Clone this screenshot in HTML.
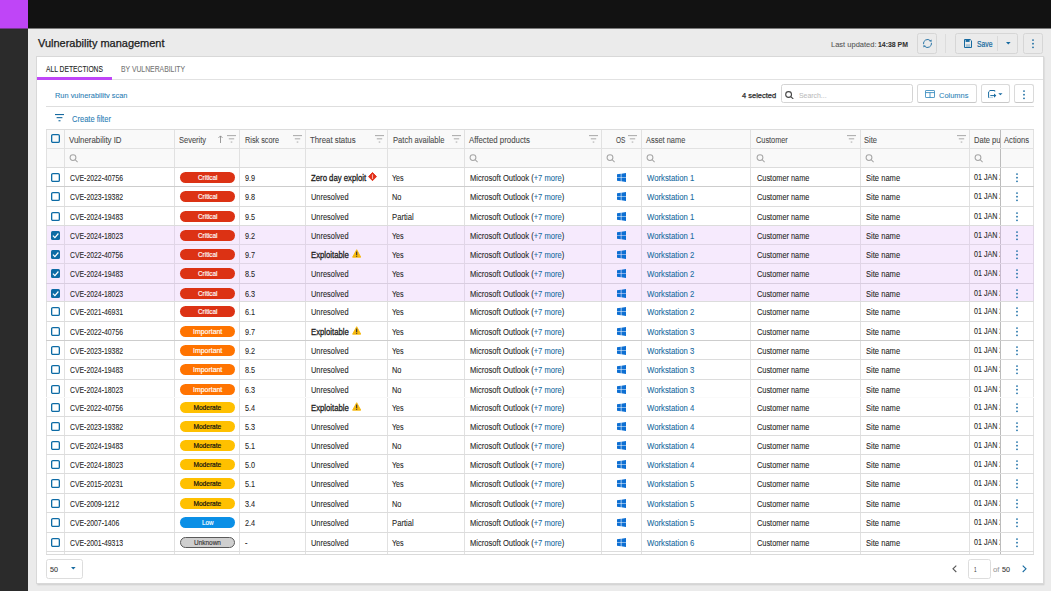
<!DOCTYPE html>
<html><head><meta charset="utf-8"><title>Vulnerability management</title><style>
*{margin:0;padding:0;box-sizing:border-box}
html,body{width:1051px;height:591px;overflow:hidden;background:#ebebeb;font-family:"Liberation Sans",sans-serif;color:#262626}
.ab{position:absolute}
.t{white-space:nowrap;transform-origin:0 50%;-webkit-text-stroke:0.08px currentColor}
.badge{position:absolute;width:55px;height:11px;border-radius:5.5px}
.Critical{background:#dc3214}
.Important{background:#ff7300}
.Moderate{background:#ffc000}
.Low{background:#0a8fe6}
.Unknown{background:#cfcfcf;border:0.9px solid #5a5a5a}
.btn{position:absolute;border:1px solid #d6d6d6;border-radius:2.5px}
</style></head><body>

<div class="ab" style="left:0px;top:0px;width:28px;height:591px;background:#2b2b2b;"></div>
<div class="ab" style="left:0px;top:0px;width:28px;height:28px;background:#bf45f7;"></div>
<div class="ab" style="left:28px;top:0px;width:1023px;height:28px;background:#121212;"></div>
<div class="ab" style="left:28px;top:28px;width:1023px;height:1px;background:#7a7a7a;"></div>
<div class="ab" style="left:0px;top:28px;width:28px;height:1px;background:#76388f;"></div>
<div class="ab t" style="left:38.30px;top:37.85px;font-size:10.9px;line-height:10.9px;transform:scaleX(1.008);color:#1a1a1a;-webkit-text-stroke:0.25px #1a1a1a;">Vulnerability management</div>
<div class="ab t" style="left:830.80px;top:41.10px;font-size:7.4px;line-height:7.4px;transform:scaleX(1.017);color:#555;">Last updated:</div>
<div class="ab t" style="left:878.30px;top:41.10px;font-size:7.4px;line-height:7.4px;transform:scaleX(0.932);color:#333;font-weight:bold;">14:38 PM</div>
<div class="btn" style="left:917px;top:33px;width:20px;height:21px"></div>
<svg class="ab" style="left:921.9px;top:37.9px" width="11" height="11" viewBox="0 0 11 11"><path d="M1.561 6.195 A4 4 0 0 1 8.328 2.672" fill="none" stroke="#176aa0" stroke-width="0.9"/><path d="M9.439 4.805 A4 4 0 0 1 2.672 8.328" fill="none" stroke="#176aa0" stroke-width="0.9"/><path d="M9.6 3.7 L9.5 1.5 L7.3 3.3 Z" fill="#176aa0"/><path d="M1.4 7.3 L1.5 9.5 L3.7 7.7 Z" fill="#176aa0"/></svg>
<div class="ab" style="left:945px;top:34px;width:1px;height:19px;background:#dcdcdc;"></div>
<div class="btn" style="left:955px;top:33px;width:63px;height:21px"></div>
<div class="ab" style="left:997.2px;top:35.9px;width:1px;height:15px;background:#dadada;"></div>
<svg class="ab" style="left:964px;top:38.9px" width="8" height="9" viewBox="0 0 8 9"><path d="M0.5 0.5 H6.2 L7.5 1.8 V8.5 H0.5 Z" fill="none" stroke="#176aa0" stroke-width="1"/><rect x="1.6" y="0.5" width="4" height="2.4" fill="#176aa0"/><rect x="1.8" y="5.2" width="4.4" height="2.8" fill="#176aa0" opacity="0.3"/></svg>
<div class="ab t" style="left:976.60px;top:40.70px;font-size:8.2px;line-height:8.2px;transform:scaleX(0.824);color:#176aa0;-webkit-text-stroke:0.2px #176aa0;">Save</div>
<svg class="ab" style="left:1005.6px;top:42.2px" width="5" height="3" viewBox="0 0 5 3"><path d="M0 0 H4.6 L2.3 2.4 Z" fill="#176aa0"/></svg>
<div class="btn" style="left:1023px;top:33px;width:20px;height:21px"></div>
<svg class="ab" style="left:1030.8px;top:38.6px" width="4" height="10" viewBox="0 0 4 10"><circle cx="2" cy="1.1" r="0.88" fill="#176aa0"/><circle cx="2" cy="4.7" r="0.88" fill="#176aa0"/><circle cx="2" cy="8.3" r="0.88" fill="#176aa0"/></svg>
<div class="ab" style="left:36px;top:56px;width:1008px;height:528px;background:#fff;border:1px solid #d8d8d8;box-shadow:0.5px 1px 1.5px rgba(0,0,0,0.15)"></div>
<div class="ab t" style="left:46.00px;top:65.15px;font-size:8.3px;line-height:8.3px;transform:scaleX(0.811);color:#1e1e1e;-webkit-text-stroke:0.1px #1e1e1e;">ALL DETECTIONS</div>
<div class="ab t" style="left:121.00px;top:65.15px;font-size:8.3px;line-height:8.3px;transform:scaleX(0.823);color:#747474;">BY VULNERABILITY</div>
<div class="ab" style="left:37px;top:79.2px;width:1006px;height:0.9px;background:#e2e2e2;"></div>
<div class="ab" style="left:37px;top:77.1px;width:75px;height:2.5px;background:#bf45f7;"></div>
<div class="ab" style="left:50px;top:88px;width:90px;height:10.4px;overflow:hidden">
<div class="ab t" style="left:4.70px;top:3.85px;font-size:7.9px;line-height:7.9px;transform:scaleX(0.938);color:#2a7db4;">Run vulnerability scan</div>
</div>
<div class="ab t" style="left:741.90px;top:92.00px;font-size:7.6px;line-height:7.6px;transform:scaleX(0.987);color:#2a2a2a;-webkit-text-stroke:0.25px #2a2a2a;">4 selected</div>
<div class="btn" style="left:781px;top:84px;width:132px;height:19px;border-color:#d4d4d4"></div>
<svg class="ab" style="left:785.2px;top:90.6px" width="9" height="8" viewBox="0 0 9 8"><circle cx="3.6" cy="3.5" r="2.9" fill="none" stroke="#454545" stroke-width="1.1"/><line x1="5.7" y1="5.6" x2="8.3" y2="7.9" stroke="#454545" stroke-width="1.1"/></svg>
<div class="ab t" style="left:798.80px;top:91.90px;font-size:7.8px;line-height:7.8px;transform:scaleX(0.884);color:#bdbdbd;">Search...</div>
<div class="btn" style="left:917px;top:84px;width:60px;height:19px;border-color:#dadada;border-bottom-color:#c8c8c8"></div>
<svg class="ab" style="left:925px;top:89.9px" width="10" height="8" viewBox="0 0 10 8"><rect x="0.45" y="0.45" width="9.1" height="7.1" rx="0.6" fill="none" stroke="#3a8cc0" stroke-width="0.9"/><line x1="0.45" y1="2.6" x2="9.55" y2="2.6" stroke="#3a8cc0" stroke-width="0.9"/><line x1="5" y1="2.6" x2="5" y2="7.55" stroke="#3a8cc0" stroke-width="0.9"/></svg>
<div class="ab t" style="left:938.80px;top:91.90px;font-size:7.8px;line-height:7.8px;transform:scaleX(0.955);color:#2f84b8;">Columns</div>
<div class="btn" style="left:981px;top:84px;width:29px;height:19px;border-color:#dadada;border-bottom-color:#c8c8c8"></div>
<svg class="ab" style="left:987.8px;top:89.8px" width="16" height="9" viewBox="0 0 16 9"><path d="M0.6 7.7 V1.9 L2 0.5 H6.8 V1.6" fill="none" stroke="#176aa0" stroke-width="1"/><path d="M0.6 7.6 H5" fill="none" stroke="#176aa0" stroke-width="0.6" opacity="0.5"/><path d="M2.3 5.6 H6.6" stroke="#176aa0" stroke-width="1"/><path d="M6 3.5 L8.3 5.6 L6 7.7 Z" fill="#176aa0"/><path d="M10.3 3.3 H14.5 L12.4 5.2 Z" fill="#176aa0"/></svg>
<div class="btn" style="left:1014px;top:84px;width:20px;height:19px;border-color:#dadada;border-bottom-color:#c8c8c8"></div>
<svg class="ab" style="left:1022.2px;top:89.6px" width="4" height="10" viewBox="0 0 4 10"><circle cx="2" cy="1.1" r="0.88" fill="#176aa0"/><circle cx="2" cy="4.7" r="0.88" fill="#176aa0"/><circle cx="2" cy="8.3" r="0.88" fill="#176aa0"/></svg>
<div class="ab" style="left:46.2px;top:105.8px;width:987.7px;height:1px;background:#dedede;"></div>
<svg class="ab" style="left:54.6px;top:114.4px" width="9" height="8" viewBox="0 0 9 8"><rect x="0" y="0" width="9" height="1.1" fill="#176aa0"/><rect x="1.6" y="3.1" width="5.8" height="1.1" fill="#176aa0"/><rect x="3.5" y="6.2" width="2" height="1.1" fill="#176aa0"/></svg>
<div class="ab t" style="left:72.00px;top:115.15px;font-size:8.3px;line-height:8.3px;transform:scaleX(0.907);color:#2a7db4;">Create filter</div>
<div class="ab" style="left:46.4px;top:129.3px;width:987.1999999999999px;height:38.0px;background:#f9f9f9;"></div>
<div class="ab" style="left:45.9px;top:129.3px;width:1px;height:425.59999999999997px;background:#e1e1e1;"></div>
<div class="ab" style="left:63.900000000000006px;top:129.3px;width:1px;height:425.59999999999997px;background:#e1e1e1;"></div>
<div class="ab" style="left:174.1px;top:129.3px;width:1px;height:425.59999999999997px;background:#e1e1e1;"></div>
<div class="ab" style="left:238.9px;top:129.3px;width:1px;height:425.59999999999997px;background:#e1e1e1;"></div>
<div class="ab" style="left:305.1px;top:129.3px;width:1px;height:425.59999999999997px;background:#e1e1e1;"></div>
<div class="ab" style="left:387.0px;top:129.3px;width:1px;height:425.59999999999997px;background:#e1e1e1;"></div>
<div class="ab" style="left:464.1px;top:129.3px;width:1px;height:425.59999999999997px;background:#e1e1e1;"></div>
<div class="ab" style="left:601.1px;top:129.3px;width:1px;height:425.59999999999997px;background:#e1e1e1;"></div>
<div class="ab" style="left:641.1px;top:129.3px;width:1px;height:425.59999999999997px;background:#e1e1e1;"></div>
<div class="ab" style="left:750.2px;top:129.3px;width:1px;height:425.59999999999997px;background:#e1e1e1;"></div>
<div class="ab" style="left:859.9px;top:129.3px;width:1px;height:425.59999999999997px;background:#e1e1e1;"></div>
<div class="ab" style="left:969.1px;top:129.3px;width:1px;height:425.59999999999997px;background:#e1e1e1;"></div>
<div class="ab" style="left:999.9px;top:129.3px;width:1px;height:425.59999999999997px;background:#bcbcbc;"></div>
<div class="ab" style="left:1033.1px;top:129.3px;width:1px;height:425.59999999999997px;background:#e1e1e1;"></div>
<div class="ab" style="left:46.4px;top:129.3px;width:987.1999999999999px;height:1px;background:#dcdcdc;"></div>
<div class="ab" style="left:46.4px;top:148.2px;width:987.1999999999999px;height:1px;background:#e2e2e2;"></div>
<div class="ab" style="left:46.4px;top:167px;width:987.1999999999999px;height:1px;background:#dcdcdc;"></div>
<div class="ab" style="left:46.4px;top:186px;width:987.1999999999999px;height:1px;background:#cdcdcd;"></div>
<div class="ab" style="left:46.4px;top:206px;width:987.1999999999999px;height:1px;background:#dcdcdc;"></div>
<div class="ab" style="left:46.4px;top:225px;width:987.1999999999999px;height:1px;background:#dcdcdc;"></div>
<div class="ab" style="left:46.9px;top:226px;width:986.6999999999999px;height:18px;background:rgba(225,185,248,0.3);"></div>
<div class="ab" style="left:46.4px;top:244px;width:987.1999999999999px;height:1px;background:#e0d5e6;"></div>
<div class="ab" style="left:46.9px;top:245px;width:986.6999999999999px;height:18px;background:rgba(225,185,248,0.3);"></div>
<div class="ab" style="left:46.4px;top:263px;width:987.1999999999999px;height:1px;background:#e0d5e6;"></div>
<div class="ab" style="left:46.9px;top:264px;width:986.6999999999999px;height:19px;background:rgba(225,185,248,0.3);"></div>
<div class="ab" style="left:46.4px;top:283px;width:987.1999999999999px;height:1px;background:#d9cde0;"></div>
<div class="ab" style="left:46.9px;top:284px;width:986.6999999999999px;height:17px;background:rgba(225,185,248,0.3);"></div>
<div class="ab" style="left:46.4px;top:301px;width:987.1999999999999px;height:1px;background:#dcdcdc;"></div>
<div class="ab" style="left:46.4px;top:321px;width:987.1999999999999px;height:1px;background:#dcdcdc;"></div>
<div class="ab" style="left:46.4px;top:340px;width:987.1999999999999px;height:1px;background:#cdcdcd;"></div>
<div class="ab" style="left:46.4px;top:359px;width:987.1999999999999px;height:1px;background:#dcdcdc;"></div>
<div class="ab" style="left:46.4px;top:379px;width:987.1999999999999px;height:1px;background:#dcdcdc;"></div>
<div class="ab" style="left:46.4px;top:397px;width:987.1999999999999px;height:1px;background:#fafafa;"></div>
<div class="ab" style="left:46.4px;top:416px;width:987.1999999999999px;height:1px;background:#dcdcdc;"></div>
<div class="ab" style="left:46.4px;top:435px;width:987.1999999999999px;height:1px;background:#dcdcdc;"></div>
<div class="ab" style="left:46.4px;top:454px;width:987.1999999999999px;height:1px;background:#dcdcdc;"></div>
<div class="ab" style="left:46.4px;top:473px;width:987.1999999999999px;height:1px;background:#dcdcdc;"></div>
<div class="ab" style="left:46.4px;top:493px;width:987.1999999999999px;height:1px;background:#dcdcdc;"></div>
<div class="ab" style="left:46.4px;top:512px;width:987.1999999999999px;height:1px;background:#dcdcdc;"></div>
<div class="ab" style="left:46.4px;top:532px;width:987.1999999999999px;height:1px;background:#dcdcdc;"></div>
<div class="ab" style="left:46.4px;top:551px;width:987.1999999999999px;height:1px;background:#dcdcdc;"></div>
<div class="ab" style="left:46.4px;top:553.9px;width:987.1999999999999px;height:1px;background:#dadada;"></div>
<svg class="ab" style="left:51px;top:134px" width="9" height="9" viewBox="0 0 9 9"><rect x="0.65" y="0.65" width="7.7" height="7.7" rx="1.2" fill="none" stroke="#0d6ba5" stroke-width="1.3"/></svg>
<div class="ab t" style="left:69.40px;top:136.10px;font-size:8.4px;line-height:8.4px;transform:scaleX(0.938);color:#4a4a4a;">Vulnerability ID</div>
<div class="ab t" style="left:179.00px;top:136.10px;font-size:8.4px;line-height:8.4px;transform:scaleX(0.896);color:#4a4a4a;">Severity</div>
<svg class="ab" style="left:218.3px;top:134.6px" width="5" height="8.4" viewBox="0 0 5 8.4"><path d="M2.5 8.4 V1 M0.5 2.9 L2.5 0.9 L4.5 2.9" fill="none" stroke="#8a8a8a" stroke-width="0.85"/></svg>
<svg class="ab" style="left:227px;top:135px" width="9" height="8" viewBox="0 0 9 8"><rect x="0" y="0.2" width="9" height="0.9" fill="#a0a0a0"/><rect x="1.8" y="3.4" width="5.4" height="0.9" fill="#a0a0a0"/><rect x="3.7" y="6.6" width="1.6" height="0.9" fill="#a0a0a0"/></svg>
<div class="ab t" style="left:244.90px;top:136.10px;font-size:8.4px;line-height:8.4px;transform:scaleX(0.870);color:#4a4a4a;">Risk score</div>
<svg class="ab" style="left:292.9px;top:135px" width="9" height="8" viewBox="0 0 9 8"><rect x="0" y="0.2" width="9" height="0.9" fill="#a0a0a0"/><rect x="1.8" y="3.4" width="5.4" height="0.9" fill="#a0a0a0"/><rect x="3.7" y="6.6" width="1.6" height="0.9" fill="#a0a0a0"/></svg>
<div class="ab t" style="left:310.40px;top:136.10px;font-size:8.4px;line-height:8.4px;transform:scaleX(0.932);color:#4a4a4a;">Threat status</div>
<svg class="ab" style="left:375.1px;top:135px" width="9" height="8" viewBox="0 0 9 8"><rect x="0" y="0.2" width="9" height="0.9" fill="#a0a0a0"/><rect x="1.8" y="3.4" width="5.4" height="0.9" fill="#a0a0a0"/><rect x="3.7" y="6.6" width="1.6" height="0.9" fill="#a0a0a0"/></svg>
<div class="ab t" style="left:392.50px;top:136.10px;font-size:8.4px;line-height:8.4px;transform:scaleX(0.906);color:#4a4a4a;">Patch available</div>
<svg class="ab" style="left:452px;top:135px" width="9" height="8" viewBox="0 0 9 8"><rect x="0" y="0.2" width="9" height="0.9" fill="#a0a0a0"/><rect x="1.8" y="3.4" width="5.4" height="0.9" fill="#a0a0a0"/><rect x="3.7" y="6.6" width="1.6" height="0.9" fill="#a0a0a0"/></svg>
<div class="ab t" style="left:469.10px;top:136.10px;font-size:8.4px;line-height:8.4px;transform:scaleX(0.937);color:#4a4a4a;">Affected products</div>
<svg class="ab" style="left:588.8px;top:135px" width="9" height="8" viewBox="0 0 9 8"><rect x="0" y="0.2" width="9" height="0.9" fill="#a0a0a0"/><rect x="1.8" y="3.4" width="5.4" height="0.9" fill="#a0a0a0"/><rect x="3.7" y="6.6" width="1.6" height="0.9" fill="#a0a0a0"/></svg>
<div class="ab t" style="left:615.60px;top:136.10px;font-size:8.4px;line-height:8.4px;transform:scaleX(0.775);color:#4a4a4a;">OS</div>
<svg class="ab" style="left:628.3px;top:135px" width="9" height="8" viewBox="0 0 9 8"><rect x="0" y="0.2" width="9" height="0.9" fill="#a0a0a0"/><rect x="1.8" y="3.4" width="5.4" height="0.9" fill="#a0a0a0"/><rect x="3.7" y="6.6" width="1.6" height="0.9" fill="#a0a0a0"/></svg>
<div class="ab t" style="left:645.60px;top:136.10px;font-size:8.4px;line-height:8.4px;transform:scaleX(0.888);color:#4a4a4a;">Asset name</div>
<div class="ab t" style="left:756.30px;top:136.10px;font-size:8.4px;line-height:8.4px;transform:scaleX(0.876);color:#4a4a4a;">Customer</div>
<svg class="ab" style="left:847px;top:135px" width="9" height="8" viewBox="0 0 9 8"><rect x="0" y="0.2" width="9" height="0.9" fill="#a0a0a0"/><rect x="1.8" y="3.4" width="5.4" height="0.9" fill="#a0a0a0"/><rect x="3.7" y="6.6" width="1.6" height="0.9" fill="#a0a0a0"/></svg>
<div class="ab t" style="left:864.30px;top:136.10px;font-size:8.4px;line-height:8.4px;transform:scaleX(0.898);color:#4a4a4a;">Site</div>
<svg class="ab" style="left:956.8px;top:135px" width="9" height="8" viewBox="0 0 9 8"><rect x="0" y="0.2" width="9" height="0.9" fill="#a0a0a0"/><rect x="1.8" y="3.4" width="5.4" height="0.9" fill="#a0a0a0"/><rect x="3.7" y="6.6" width="1.6" height="0.9" fill="#a0a0a0"/></svg>
<div class="ab" style="left:969.6px;top:129px;width:30.299999999999955px;height:19px;overflow:hidden">
<div class="ab t" style="left:4.70px;top:7.10px;font-size:8.4px;line-height:8.4px;transform:scaleX(0.900);color:#4a4a4a;">Date published</div>
</div>
<div class="ab t" style="left:1004.20px;top:136.10px;font-size:8.4px;line-height:8.4px;transform:scaleX(0.911);color:#4a4a4a;">Actions</div>
<svg class="ab" style="left:68.8px;top:152.7px" width="10" height="10" viewBox="0 0 10 10"><circle cx="4.0" cy="4.6" r="2.9" fill="none" stroke="#a6a6a6" stroke-width="1.05"/><line x1="6.1" y1="6.7" x2="8.6" y2="9.2" stroke="#a6a6a6" stroke-width="1.05"/></svg>
<svg class="ab" style="left:469.2px;top:152.7px" width="10" height="10" viewBox="0 0 10 10"><circle cx="4.0" cy="4.6" r="2.9" fill="none" stroke="#a6a6a6" stroke-width="1.05"/><line x1="6.1" y1="6.7" x2="8.6" y2="9.2" stroke="#a6a6a6" stroke-width="1.05"/></svg>
<svg class="ab" style="left:606.2px;top:152.7px" width="10" height="10" viewBox="0 0 10 10"><circle cx="4.0" cy="4.6" r="2.9" fill="none" stroke="#a6a6a6" stroke-width="1.05"/><line x1="6.1" y1="6.7" x2="8.6" y2="9.2" stroke="#a6a6a6" stroke-width="1.05"/></svg>
<svg class="ab" style="left:645.6px;top:152.7px" width="10" height="10" viewBox="0 0 10 10"><circle cx="4.0" cy="4.6" r="2.9" fill="none" stroke="#a6a6a6" stroke-width="1.05"/><line x1="6.1" y1="6.7" x2="8.6" y2="9.2" stroke="#a6a6a6" stroke-width="1.05"/></svg>
<svg class="ab" style="left:755.5px;top:152.7px" width="10" height="10" viewBox="0 0 10 10"><circle cx="4.0" cy="4.6" r="2.9" fill="none" stroke="#a6a6a6" stroke-width="1.05"/><line x1="6.1" y1="6.7" x2="8.6" y2="9.2" stroke="#a6a6a6" stroke-width="1.05"/></svg>
<svg class="ab" style="left:864.5px;top:152.7px" width="10" height="10" viewBox="0 0 10 10"><circle cx="4.0" cy="4.6" r="2.9" fill="none" stroke="#a6a6a6" stroke-width="1.05"/><line x1="6.1" y1="6.7" x2="8.6" y2="9.2" stroke="#a6a6a6" stroke-width="1.05"/></svg>
<svg class="ab" style="left:973.7px;top:152.7px" width="10" height="10" viewBox="0 0 10 10"><circle cx="4.0" cy="4.6" r="2.9" fill="none" stroke="#a6a6a6" stroke-width="1.05"/><line x1="6.1" y1="6.7" x2="8.6" y2="9.2" stroke="#a6a6a6" stroke-width="1.05"/></svg>
<svg class="ab" style="left:51px;top:173px" width="9" height="9" viewBox="0 0 9 9"><rect x="0.65" y="0.65" width="7.7" height="7.7" rx="1.2" fill="none" stroke="#0d6ba5" stroke-width="1.3"/></svg>
<div class="ab t" style="left:69.60px;top:174.70px;font-size:8.2px;line-height:8.2px;transform:scaleX(0.839);color:#262626;">CVE-2022-40756</div>
<div class="badge Critical" style="left:179.9px;top:171.70px"></div>
<div class="ab t" style="left:197.65px;top:174.50px;font-size:6.6px;line-height:6.6px;transform:scaleX(0.967);color:#fff;-webkit-text-stroke:0.15px #fff;">Critical</div>
<div class="ab t" style="left:244.60px;top:174.70px;font-size:8.2px;line-height:8.2px;transform:scaleX(0.887);">9.9</div>
<div class="ab t" style="left:311.40px;top:174.70px;font-size:8.2px;line-height:8.2px;transform:scaleX(0.948);color:#1a1a1a;-webkit-text-stroke:0.26px #1a1a1a;">Zero day exploit</div>
<svg class="ab" style="left:368.3px;top:172.20000000000002px" width="9" height="9.2" viewBox="0 0 9 9.2"><path d="M4.5 0.5 L8.5 4.6 L4.5 8.7 L0.5 4.6 Z" fill="#e2301a" stroke="#e2301a" stroke-width="0.9" stroke-linejoin="round"/><rect x="3.95" y="2.2" width="1.1" height="4.8" rx="0.5" fill="#f4b0a8"/></svg>
<div class="ab t" style="left:392.30px;top:174.70px;font-size:8.2px;line-height:8.2px;transform:scaleX(0.876);">Yes</div>
<div class="ab t" style="left:469.90px;top:174.70px;font-size:8.2px;line-height:8.2px;transform:scaleX(0.927);">Microsoft Outlook (<span style="color:#176aa0">+7 more</span>)</div>
<svg class="ab" style="left:617px;top:172.8px" width="9" height="9" viewBox="0 0 9 9"><path d="M0 1.3 L3.8 0.75 V4.2 H0 Z M4.4 0.65 L9 0 V4.2 H4.4 Z M0 4.8 H3.8 V8.25 L0 7.7 Z M4.4 4.8 H9 V9 L4.4 8.35 Z" fill="#0d6fd3"/></svg>
<div class="ab t" style="left:646.90px;top:174.70px;font-size:8.2px;line-height:8.2px;transform:scaleX(0.946);color:#176aa0;">Workstation 1</div>
<div class="ab t" style="left:756.90px;top:174.70px;font-size:8.2px;line-height:8.2px;transform:scaleX(0.900);">Customer name</div>
<div class="ab t" style="left:865.60px;top:174.70px;font-size:8.2px;line-height:8.2px;transform:scaleX(0.926);">Site name</div>
<div class="ab" style="left:969.6px;top:168.30px;width:30.199999999999953px;height:18.70px;overflow:hidden">
<div class="ab t" style="left:4.90px;top:5.70px;font-size:8.2px;line-height:8.2px;transform:scaleX(0.870);">01 JAN 2024</div>
</div>
<svg class="ab" style="left:1015px;top:172.9px" width="4" height="10" viewBox="0 0 4 10"><circle cx="2" cy="1.1" r="0.88" fill="#1c6fa6"/><circle cx="2" cy="4.7" r="0.88" fill="#1c6fa6"/><circle cx="2" cy="8.3" r="0.88" fill="#1c6fa6"/></svg>
<svg class="ab" style="left:51px;top:192px" width="9" height="9" viewBox="0 0 9 9"><rect x="0.65" y="0.65" width="7.7" height="7.7" rx="1.2" fill="none" stroke="#0d6ba5" stroke-width="1.3"/></svg>
<div class="ab t" style="left:69.60px;top:193.70px;font-size:8.2px;line-height:8.2px;transform:scaleX(0.839);color:#262626;">CVE-2023-19382</div>
<div class="badge Critical" style="left:179.9px;top:190.70px"></div>
<div class="ab t" style="left:197.65px;top:193.50px;font-size:6.6px;line-height:6.6px;transform:scaleX(0.967);color:#fff;-webkit-text-stroke:0.15px #fff;">Critical</div>
<div class="ab t" style="left:244.60px;top:193.70px;font-size:8.2px;line-height:8.2px;transform:scaleX(0.887);">9.8</div>
<div class="ab t" style="left:311.40px;top:193.70px;font-size:8.2px;line-height:8.2px;transform:scaleX(0.908);">Unresolved</div>
<div class="ab t" style="left:392.30px;top:193.70px;font-size:8.2px;line-height:8.2px;transform:scaleX(0.900);">No</div>
<div class="ab t" style="left:469.90px;top:193.70px;font-size:8.2px;line-height:8.2px;transform:scaleX(0.927);">Microsoft Outlook (<span style="color:#176aa0">+7 more</span>)</div>
<svg class="ab" style="left:617px;top:191.8px" width="9" height="9" viewBox="0 0 9 9"><path d="M0 1.3 L3.8 0.75 V4.2 H0 Z M4.4 0.65 L9 0 V4.2 H4.4 Z M0 4.8 H3.8 V8.25 L0 7.7 Z M4.4 4.8 H9 V9 L4.4 8.35 Z" fill="#0d6fd3"/></svg>
<div class="ab t" style="left:646.90px;top:193.70px;font-size:8.2px;line-height:8.2px;transform:scaleX(0.946);color:#176aa0;">Workstation 1</div>
<div class="ab t" style="left:756.90px;top:193.70px;font-size:8.2px;line-height:8.2px;transform:scaleX(0.900);">Customer name</div>
<div class="ab t" style="left:865.60px;top:193.70px;font-size:8.2px;line-height:8.2px;transform:scaleX(0.926);">Site name</div>
<div class="ab" style="left:969.6px;top:187.30px;width:30.199999999999953px;height:19.70px;overflow:hidden">
<div class="ab t" style="left:4.90px;top:5.70px;font-size:8.2px;line-height:8.2px;transform:scaleX(0.870);">01 JAN 2024</div>
</div>
<svg class="ab" style="left:1015px;top:191.9px" width="4" height="10" viewBox="0 0 4 10"><circle cx="2" cy="1.1" r="0.88" fill="#1c6fa6"/><circle cx="2" cy="4.7" r="0.88" fill="#1c6fa6"/><circle cx="2" cy="8.3" r="0.88" fill="#1c6fa6"/></svg>
<svg class="ab" style="left:51px;top:212px" width="9" height="9" viewBox="0 0 9 9"><rect x="0.65" y="0.65" width="7.7" height="7.7" rx="1.2" fill="none" stroke="#0d6ba5" stroke-width="1.3"/></svg>
<div class="ab t" style="left:69.60px;top:213.70px;font-size:8.2px;line-height:8.2px;transform:scaleX(0.839);color:#262626;">CVE-2024-19483</div>
<div class="badge Critical" style="left:179.9px;top:210.70px"></div>
<div class="ab t" style="left:197.65px;top:213.50px;font-size:6.6px;line-height:6.6px;transform:scaleX(0.967);color:#fff;-webkit-text-stroke:0.15px #fff;">Critical</div>
<div class="ab t" style="left:244.60px;top:213.70px;font-size:8.2px;line-height:8.2px;transform:scaleX(0.887);">9.5</div>
<div class="ab t" style="left:311.40px;top:213.70px;font-size:8.2px;line-height:8.2px;transform:scaleX(0.908);">Unresolved</div>
<div class="ab t" style="left:392.30px;top:213.70px;font-size:8.2px;line-height:8.2px;transform:scaleX(0.939);">Partial</div>
<div class="ab t" style="left:469.90px;top:213.70px;font-size:8.2px;line-height:8.2px;transform:scaleX(0.927);">Microsoft Outlook (<span style="color:#176aa0">+7 more</span>)</div>
<svg class="ab" style="left:617px;top:211.8px" width="9" height="9" viewBox="0 0 9 9"><path d="M0 1.3 L3.8 0.75 V4.2 H0 Z M4.4 0.65 L9 0 V4.2 H4.4 Z M0 4.8 H3.8 V8.25 L0 7.7 Z M4.4 4.8 H9 V9 L4.4 8.35 Z" fill="#0d6fd3"/></svg>
<div class="ab t" style="left:646.90px;top:213.70px;font-size:8.2px;line-height:8.2px;transform:scaleX(0.946);color:#176aa0;">Workstation 1</div>
<div class="ab t" style="left:756.90px;top:213.70px;font-size:8.2px;line-height:8.2px;transform:scaleX(0.900);">Customer name</div>
<div class="ab t" style="left:865.60px;top:213.70px;font-size:8.2px;line-height:8.2px;transform:scaleX(0.926);">Site name</div>
<div class="ab" style="left:969.6px;top:207.30px;width:30.199999999999953px;height:18.70px;overflow:hidden">
<div class="ab t" style="left:4.90px;top:5.70px;font-size:8.2px;line-height:8.2px;transform:scaleX(0.870);">01 JAN 2024</div>
</div>
<svg class="ab" style="left:1015px;top:211.9px" width="4" height="10" viewBox="0 0 4 10"><circle cx="2" cy="1.1" r="0.88" fill="#1c6fa6"/><circle cx="2" cy="4.7" r="0.88" fill="#1c6fa6"/><circle cx="2" cy="8.3" r="0.88" fill="#1c6fa6"/></svg>
<svg class="ab" style="left:51px;top:231px" width="9" height="9" viewBox="0 0 9 9"><rect x="0" y="0" width="9" height="9" rx="1.5" fill="#0d6ba5"/><path d="M1.9 4.6 L3.9 6.6 L7.4 2.5" fill="none" stroke="#fff" stroke-width="1.2"/></svg>
<div class="ab t" style="left:69.60px;top:232.70px;font-size:8.2px;line-height:8.2px;transform:scaleX(0.839);color:#262626;">CVE-2024-18023</div>
<div class="badge Critical" style="left:179.9px;top:229.70px"></div>
<div class="ab t" style="left:197.65px;top:232.50px;font-size:6.6px;line-height:6.6px;transform:scaleX(0.967);color:#fff;-webkit-text-stroke:0.15px #fff;">Critical</div>
<div class="ab t" style="left:244.60px;top:232.70px;font-size:8.2px;line-height:8.2px;transform:scaleX(0.887);">9.2</div>
<div class="ab t" style="left:311.40px;top:232.70px;font-size:8.2px;line-height:8.2px;transform:scaleX(0.908);">Unresolved</div>
<div class="ab t" style="left:392.30px;top:232.70px;font-size:8.2px;line-height:8.2px;transform:scaleX(0.876);">Yes</div>
<div class="ab t" style="left:469.90px;top:232.70px;font-size:8.2px;line-height:8.2px;transform:scaleX(0.927);">Microsoft Outlook (<span style="color:#176aa0">+7 more</span>)</div>
<svg class="ab" style="left:617px;top:230.8px" width="9" height="9" viewBox="0 0 9 9"><path d="M0 1.3 L3.8 0.75 V4.2 H0 Z M4.4 0.65 L9 0 V4.2 H4.4 Z M0 4.8 H3.8 V8.25 L0 7.7 Z M4.4 4.8 H9 V9 L4.4 8.35 Z" fill="#0d6fd3"/></svg>
<div class="ab t" style="left:646.90px;top:232.70px;font-size:8.2px;line-height:8.2px;transform:scaleX(0.946);color:#176aa0;">Workstation 1</div>
<div class="ab t" style="left:756.90px;top:232.70px;font-size:8.2px;line-height:8.2px;transform:scaleX(0.900);">Customer name</div>
<div class="ab t" style="left:865.60px;top:232.70px;font-size:8.2px;line-height:8.2px;transform:scaleX(0.926);">Site name</div>
<div class="ab" style="left:969.6px;top:226.30px;width:30.199999999999953px;height:18.70px;overflow:hidden">
<div class="ab t" style="left:4.90px;top:5.70px;font-size:8.2px;line-height:8.2px;transform:scaleX(0.870);">01 JAN 2024</div>
</div>
<svg class="ab" style="left:1015px;top:230.9px" width="4" height="10" viewBox="0 0 4 10"><circle cx="2" cy="1.1" r="0.88" fill="#1c6fa6"/><circle cx="2" cy="4.7" r="0.88" fill="#1c6fa6"/><circle cx="2" cy="8.3" r="0.88" fill="#1c6fa6"/></svg>
<svg class="ab" style="left:51px;top:250px" width="9" height="9" viewBox="0 0 9 9"><rect x="0" y="0" width="9" height="9" rx="1.5" fill="#0d6ba5"/><path d="M1.9 4.6 L3.9 6.6 L7.4 2.5" fill="none" stroke="#fff" stroke-width="1.2"/></svg>
<div class="ab t" style="left:69.60px;top:251.70px;font-size:8.2px;line-height:8.2px;transform:scaleX(0.839);color:#262626;">CVE-2022-40756</div>
<div class="badge Critical" style="left:179.9px;top:248.70px"></div>
<div class="ab t" style="left:197.65px;top:251.50px;font-size:6.6px;line-height:6.6px;transform:scaleX(0.967);color:#fff;-webkit-text-stroke:0.15px #fff;">Critical</div>
<div class="ab t" style="left:244.60px;top:251.70px;font-size:8.2px;line-height:8.2px;transform:scaleX(0.887);">9.7</div>
<div class="ab t" style="left:311.40px;top:251.70px;font-size:8.2px;line-height:8.2px;transform:scaleX(0.945);color:#1a1a1a;-webkit-text-stroke:0.26px #1a1a1a;">Exploitable</div>
<svg class="ab" style="left:351.8px;top:249.3px" width="9.4" height="9" viewBox="0 0 9.4 9"><path d="M4.7 0.7 L8.8 8.2 H0.6 Z" fill="#f6b90d" stroke="#f6b90d" stroke-width="0.9" stroke-linejoin="round"/><rect x="4.2" y="2.6" width="1.0" height="3.6" fill="#1e1e3a"/><rect x="4.2" y="6.9" width="1.0" height="0.9" fill="#1e1e3a"/></svg>
<div class="ab t" style="left:392.30px;top:251.70px;font-size:8.2px;line-height:8.2px;transform:scaleX(0.876);">Yes</div>
<div class="ab t" style="left:469.90px;top:251.70px;font-size:8.2px;line-height:8.2px;transform:scaleX(0.927);">Microsoft Outlook (<span style="color:#176aa0">+7 more</span>)</div>
<svg class="ab" style="left:617px;top:249.8px" width="9" height="9" viewBox="0 0 9 9"><path d="M0 1.3 L3.8 0.75 V4.2 H0 Z M4.4 0.65 L9 0 V4.2 H4.4 Z M0 4.8 H3.8 V8.25 L0 7.7 Z M4.4 4.8 H9 V9 L4.4 8.35 Z" fill="#0d6fd3"/></svg>
<div class="ab t" style="left:646.90px;top:251.70px;font-size:8.2px;line-height:8.2px;transform:scaleX(0.946);color:#176aa0;">Workstation 2</div>
<div class="ab t" style="left:756.90px;top:251.70px;font-size:8.2px;line-height:8.2px;transform:scaleX(0.900);">Customer name</div>
<div class="ab t" style="left:865.60px;top:251.70px;font-size:8.2px;line-height:8.2px;transform:scaleX(0.926);">Site name</div>
<div class="ab" style="left:969.6px;top:245.30px;width:30.199999999999953px;height:18.70px;overflow:hidden">
<div class="ab t" style="left:4.90px;top:5.70px;font-size:8.2px;line-height:8.2px;transform:scaleX(0.870);">01 JAN 2024</div>
</div>
<svg class="ab" style="left:1015px;top:249.9px" width="4" height="10" viewBox="0 0 4 10"><circle cx="2" cy="1.1" r="0.88" fill="#1c6fa6"/><circle cx="2" cy="4.7" r="0.88" fill="#1c6fa6"/><circle cx="2" cy="8.3" r="0.88" fill="#1c6fa6"/></svg>
<svg class="ab" style="left:51px;top:269px" width="9" height="9" viewBox="0 0 9 9"><rect x="0" y="0" width="9" height="9" rx="1.5" fill="#0d6ba5"/><path d="M1.9 4.6 L3.9 6.6 L7.4 2.5" fill="none" stroke="#fff" stroke-width="1.2"/></svg>
<div class="ab t" style="left:69.60px;top:270.70px;font-size:8.2px;line-height:8.2px;transform:scaleX(0.839);color:#262626;">CVE-2024-19483</div>
<div class="badge Critical" style="left:179.9px;top:267.70px"></div>
<div class="ab t" style="left:197.65px;top:270.50px;font-size:6.6px;line-height:6.6px;transform:scaleX(0.967);color:#fff;-webkit-text-stroke:0.15px #fff;">Critical</div>
<div class="ab t" style="left:244.60px;top:270.70px;font-size:8.2px;line-height:8.2px;transform:scaleX(0.887);">8.5</div>
<div class="ab t" style="left:311.40px;top:270.70px;font-size:8.2px;line-height:8.2px;transform:scaleX(0.908);">Unresolved</div>
<div class="ab t" style="left:392.30px;top:270.70px;font-size:8.2px;line-height:8.2px;transform:scaleX(0.876);">Yes</div>
<div class="ab t" style="left:469.90px;top:270.70px;font-size:8.2px;line-height:8.2px;transform:scaleX(0.927);">Microsoft Outlook (<span style="color:#176aa0">+7 more</span>)</div>
<svg class="ab" style="left:617px;top:268.8px" width="9" height="9" viewBox="0 0 9 9"><path d="M0 1.3 L3.8 0.75 V4.2 H0 Z M4.4 0.65 L9 0 V4.2 H4.4 Z M0 4.8 H3.8 V8.25 L0 7.7 Z M4.4 4.8 H9 V9 L4.4 8.35 Z" fill="#0d6fd3"/></svg>
<div class="ab t" style="left:646.90px;top:270.70px;font-size:8.2px;line-height:8.2px;transform:scaleX(0.946);color:#176aa0;">Workstation 2</div>
<div class="ab t" style="left:756.90px;top:270.70px;font-size:8.2px;line-height:8.2px;transform:scaleX(0.900);">Customer name</div>
<div class="ab t" style="left:865.60px;top:270.70px;font-size:8.2px;line-height:8.2px;transform:scaleX(0.926);">Site name</div>
<div class="ab" style="left:969.6px;top:264.30px;width:30.199999999999953px;height:19.70px;overflow:hidden">
<div class="ab t" style="left:4.90px;top:5.70px;font-size:8.2px;line-height:8.2px;transform:scaleX(0.870);">01 JAN 2024</div>
</div>
<svg class="ab" style="left:1015px;top:268.90000000000003px" width="4" height="10" viewBox="0 0 4 10"><circle cx="2" cy="1.1" r="0.88" fill="#1c6fa6"/><circle cx="2" cy="4.7" r="0.88" fill="#1c6fa6"/><circle cx="2" cy="8.3" r="0.88" fill="#1c6fa6"/></svg>
<svg class="ab" style="left:51px;top:289px" width="9" height="9" viewBox="0 0 9 9"><rect x="0" y="0" width="9" height="9" rx="1.5" fill="#0d6ba5"/><path d="M1.9 4.6 L3.9 6.6 L7.4 2.5" fill="none" stroke="#fff" stroke-width="1.2"/></svg>
<div class="ab t" style="left:69.60px;top:290.70px;font-size:8.2px;line-height:8.2px;transform:scaleX(0.839);color:#262626;">CVE-2024-18023</div>
<div class="badge Critical" style="left:179.9px;top:287.70px"></div>
<div class="ab t" style="left:197.65px;top:290.50px;font-size:6.6px;line-height:6.6px;transform:scaleX(0.967);color:#fff;-webkit-text-stroke:0.15px #fff;">Critical</div>
<div class="ab t" style="left:244.60px;top:290.70px;font-size:8.2px;line-height:8.2px;transform:scaleX(0.887);">6.3</div>
<div class="ab t" style="left:311.40px;top:290.70px;font-size:8.2px;line-height:8.2px;transform:scaleX(0.908);">Unresolved</div>
<div class="ab t" style="left:392.30px;top:290.70px;font-size:8.2px;line-height:8.2px;transform:scaleX(0.876);">Yes</div>
<div class="ab t" style="left:469.90px;top:290.70px;font-size:8.2px;line-height:8.2px;transform:scaleX(0.927);">Microsoft Outlook (<span style="color:#176aa0">+7 more</span>)</div>
<svg class="ab" style="left:617px;top:288.8px" width="9" height="9" viewBox="0 0 9 9"><path d="M0 1.3 L3.8 0.75 V4.2 H0 Z M4.4 0.65 L9 0 V4.2 H4.4 Z M0 4.8 H3.8 V8.25 L0 7.7 Z M4.4 4.8 H9 V9 L4.4 8.35 Z" fill="#0d6fd3"/></svg>
<div class="ab t" style="left:646.90px;top:290.70px;font-size:8.2px;line-height:8.2px;transform:scaleX(0.946);color:#176aa0;">Workstation 2</div>
<div class="ab t" style="left:756.90px;top:290.70px;font-size:8.2px;line-height:8.2px;transform:scaleX(0.900);">Customer name</div>
<div class="ab t" style="left:865.60px;top:290.70px;font-size:8.2px;line-height:8.2px;transform:scaleX(0.926);">Site name</div>
<div class="ab" style="left:969.6px;top:284.30px;width:30.199999999999953px;height:17.70px;overflow:hidden">
<div class="ab t" style="left:4.90px;top:5.70px;font-size:8.2px;line-height:8.2px;transform:scaleX(0.870);">01 JAN 2024</div>
</div>
<svg class="ab" style="left:1015px;top:288.90000000000003px" width="4" height="10" viewBox="0 0 4 10"><circle cx="2" cy="1.1" r="0.88" fill="#1c6fa6"/><circle cx="2" cy="4.7" r="0.88" fill="#1c6fa6"/><circle cx="2" cy="8.3" r="0.88" fill="#1c6fa6"/></svg>
<svg class="ab" style="left:51px;top:307px" width="9" height="9" viewBox="0 0 9 9"><rect x="0.65" y="0.65" width="7.7" height="7.7" rx="1.2" fill="none" stroke="#0d6ba5" stroke-width="1.3"/></svg>
<div class="ab t" style="left:69.60px;top:308.70px;font-size:8.2px;line-height:8.2px;transform:scaleX(0.839);color:#262626;">CVE-2021-46931</div>
<div class="badge Critical" style="left:179.9px;top:305.70px"></div>
<div class="ab t" style="left:197.65px;top:308.50px;font-size:6.6px;line-height:6.6px;transform:scaleX(0.967);color:#fff;-webkit-text-stroke:0.15px #fff;">Critical</div>
<div class="ab t" style="left:244.60px;top:308.70px;font-size:8.2px;line-height:8.2px;transform:scaleX(0.887);">6.1</div>
<div class="ab t" style="left:311.40px;top:308.70px;font-size:8.2px;line-height:8.2px;transform:scaleX(0.908);">Unresolved</div>
<div class="ab t" style="left:392.30px;top:308.70px;font-size:8.2px;line-height:8.2px;transform:scaleX(0.876);">Yes</div>
<div class="ab t" style="left:469.90px;top:308.70px;font-size:8.2px;line-height:8.2px;transform:scaleX(0.927);">Microsoft Outlook (<span style="color:#176aa0">+7 more</span>)</div>
<svg class="ab" style="left:617px;top:306.8px" width="9" height="9" viewBox="0 0 9 9"><path d="M0 1.3 L3.8 0.75 V4.2 H0 Z M4.4 0.65 L9 0 V4.2 H4.4 Z M0 4.8 H3.8 V8.25 L0 7.7 Z M4.4 4.8 H9 V9 L4.4 8.35 Z" fill="#0d6fd3"/></svg>
<div class="ab t" style="left:646.90px;top:308.70px;font-size:8.2px;line-height:8.2px;transform:scaleX(0.946);color:#176aa0;">Workstation 2</div>
<div class="ab t" style="left:756.90px;top:308.70px;font-size:8.2px;line-height:8.2px;transform:scaleX(0.900);">Customer name</div>
<div class="ab t" style="left:865.60px;top:308.70px;font-size:8.2px;line-height:8.2px;transform:scaleX(0.926);">Site name</div>
<div class="ab" style="left:969.6px;top:302.30px;width:30.199999999999953px;height:19.70px;overflow:hidden">
<div class="ab t" style="left:4.90px;top:5.70px;font-size:8.2px;line-height:8.2px;transform:scaleX(0.870);">01 JAN 2024</div>
</div>
<svg class="ab" style="left:1015px;top:306.90000000000003px" width="4" height="10" viewBox="0 0 4 10"><circle cx="2" cy="1.1" r="0.88" fill="#1c6fa6"/><circle cx="2" cy="4.7" r="0.88" fill="#1c6fa6"/><circle cx="2" cy="8.3" r="0.88" fill="#1c6fa6"/></svg>
<svg class="ab" style="left:51px;top:327px" width="9" height="9" viewBox="0 0 9 9"><rect x="0.65" y="0.65" width="7.7" height="7.7" rx="1.2" fill="none" stroke="#0d6ba5" stroke-width="1.3"/></svg>
<div class="ab t" style="left:69.60px;top:328.70px;font-size:8.2px;line-height:8.2px;transform:scaleX(0.839);color:#262626;">CVE-2022-40756</div>
<div class="badge Important" style="left:179.9px;top:325.70px"></div>
<div class="ab t" style="left:192.75px;top:328.50px;font-size:6.6px;line-height:6.6px;transform:scaleX(1.051);color:#fff;-webkit-text-stroke:0.15px #fff;">Important</div>
<div class="ab t" style="left:244.60px;top:328.70px;font-size:8.2px;line-height:8.2px;transform:scaleX(0.887);">9.7</div>
<div class="ab t" style="left:311.40px;top:328.70px;font-size:8.2px;line-height:8.2px;transform:scaleX(0.945);color:#1a1a1a;-webkit-text-stroke:0.26px #1a1a1a;">Exploitable</div>
<svg class="ab" style="left:351.8px;top:326.3px" width="9.4" height="9" viewBox="0 0 9.4 9"><path d="M4.7 0.7 L8.8 8.2 H0.6 Z" fill="#f6b90d" stroke="#f6b90d" stroke-width="0.9" stroke-linejoin="round"/><rect x="4.2" y="2.6" width="1.0" height="3.6" fill="#1e1e3a"/><rect x="4.2" y="6.9" width="1.0" height="0.9" fill="#1e1e3a"/></svg>
<div class="ab t" style="left:392.30px;top:328.70px;font-size:8.2px;line-height:8.2px;transform:scaleX(0.876);">Yes</div>
<div class="ab t" style="left:469.90px;top:328.70px;font-size:8.2px;line-height:8.2px;transform:scaleX(0.927);">Microsoft Outlook (<span style="color:#176aa0">+7 more</span>)</div>
<svg class="ab" style="left:617px;top:326.8px" width="9" height="9" viewBox="0 0 9 9"><path d="M0 1.3 L3.8 0.75 V4.2 H0 Z M4.4 0.65 L9 0 V4.2 H4.4 Z M0 4.8 H3.8 V8.25 L0 7.7 Z M4.4 4.8 H9 V9 L4.4 8.35 Z" fill="#0d6fd3"/></svg>
<div class="ab t" style="left:646.90px;top:328.70px;font-size:8.2px;line-height:8.2px;transform:scaleX(0.946);color:#176aa0;">Workstation 3</div>
<div class="ab t" style="left:756.90px;top:328.70px;font-size:8.2px;line-height:8.2px;transform:scaleX(0.900);">Customer name</div>
<div class="ab t" style="left:865.60px;top:328.70px;font-size:8.2px;line-height:8.2px;transform:scaleX(0.926);">Site name</div>
<div class="ab" style="left:969.6px;top:322.30px;width:30.199999999999953px;height:18.70px;overflow:hidden">
<div class="ab t" style="left:4.90px;top:5.70px;font-size:8.2px;line-height:8.2px;transform:scaleX(0.870);">01 JAN 2024</div>
</div>
<svg class="ab" style="left:1015px;top:326.90000000000003px" width="4" height="10" viewBox="0 0 4 10"><circle cx="2" cy="1.1" r="0.88" fill="#1c6fa6"/><circle cx="2" cy="4.7" r="0.88" fill="#1c6fa6"/><circle cx="2" cy="8.3" r="0.88" fill="#1c6fa6"/></svg>
<svg class="ab" style="left:51px;top:346px" width="9" height="9" viewBox="0 0 9 9"><rect x="0.65" y="0.65" width="7.7" height="7.7" rx="1.2" fill="none" stroke="#0d6ba5" stroke-width="1.3"/></svg>
<div class="ab t" style="left:69.60px;top:347.70px;font-size:8.2px;line-height:8.2px;transform:scaleX(0.839);color:#262626;">CVE-2023-19382</div>
<div class="badge Important" style="left:179.9px;top:344.70px"></div>
<div class="ab t" style="left:192.75px;top:347.50px;font-size:6.6px;line-height:6.6px;transform:scaleX(1.051);color:#fff;-webkit-text-stroke:0.15px #fff;">Important</div>
<div class="ab t" style="left:244.60px;top:347.70px;font-size:8.2px;line-height:8.2px;transform:scaleX(0.887);">9.2</div>
<div class="ab t" style="left:311.40px;top:347.70px;font-size:8.2px;line-height:8.2px;transform:scaleX(0.908);">Unresolved</div>
<div class="ab t" style="left:392.30px;top:347.70px;font-size:8.2px;line-height:8.2px;transform:scaleX(0.876);">Yes</div>
<div class="ab t" style="left:469.90px;top:347.70px;font-size:8.2px;line-height:8.2px;transform:scaleX(0.927);">Microsoft Outlook (<span style="color:#176aa0">+7 more</span>)</div>
<svg class="ab" style="left:617px;top:345.8px" width="9" height="9" viewBox="0 0 9 9"><path d="M0 1.3 L3.8 0.75 V4.2 H0 Z M4.4 0.65 L9 0 V4.2 H4.4 Z M0 4.8 H3.8 V8.25 L0 7.7 Z M4.4 4.8 H9 V9 L4.4 8.35 Z" fill="#0d6fd3"/></svg>
<div class="ab t" style="left:646.90px;top:347.70px;font-size:8.2px;line-height:8.2px;transform:scaleX(0.946);color:#176aa0;">Workstation 3</div>
<div class="ab t" style="left:756.90px;top:347.70px;font-size:8.2px;line-height:8.2px;transform:scaleX(0.900);">Customer name</div>
<div class="ab t" style="left:865.60px;top:347.70px;font-size:8.2px;line-height:8.2px;transform:scaleX(0.926);">Site name</div>
<div class="ab" style="left:969.6px;top:341.30px;width:30.199999999999953px;height:18.70px;overflow:hidden">
<div class="ab t" style="left:4.90px;top:5.70px;font-size:8.2px;line-height:8.2px;transform:scaleX(0.870);">01 JAN 2024</div>
</div>
<svg class="ab" style="left:1015px;top:345.90000000000003px" width="4" height="10" viewBox="0 0 4 10"><circle cx="2" cy="1.1" r="0.88" fill="#1c6fa6"/><circle cx="2" cy="4.7" r="0.88" fill="#1c6fa6"/><circle cx="2" cy="8.3" r="0.88" fill="#1c6fa6"/></svg>
<svg class="ab" style="left:51px;top:365px" width="9" height="9" viewBox="0 0 9 9"><rect x="0.65" y="0.65" width="7.7" height="7.7" rx="1.2" fill="none" stroke="#0d6ba5" stroke-width="1.3"/></svg>
<div class="ab t" style="left:69.60px;top:366.70px;font-size:8.2px;line-height:8.2px;transform:scaleX(0.839);color:#262626;">CVE-2024-19483</div>
<div class="badge Important" style="left:179.9px;top:363.70px"></div>
<div class="ab t" style="left:192.75px;top:366.50px;font-size:6.6px;line-height:6.6px;transform:scaleX(1.051);color:#fff;-webkit-text-stroke:0.15px #fff;">Important</div>
<div class="ab t" style="left:244.60px;top:366.70px;font-size:8.2px;line-height:8.2px;transform:scaleX(0.887);">8.5</div>
<div class="ab t" style="left:311.40px;top:366.70px;font-size:8.2px;line-height:8.2px;transform:scaleX(0.908);">Unresolved</div>
<div class="ab t" style="left:392.30px;top:366.70px;font-size:8.2px;line-height:8.2px;transform:scaleX(0.900);">No</div>
<div class="ab t" style="left:469.90px;top:366.70px;font-size:8.2px;line-height:8.2px;transform:scaleX(0.927);">Microsoft Outlook (<span style="color:#176aa0">+7 more</span>)</div>
<svg class="ab" style="left:617px;top:364.8px" width="9" height="9" viewBox="0 0 9 9"><path d="M0 1.3 L3.8 0.75 V4.2 H0 Z M4.4 0.65 L9 0 V4.2 H4.4 Z M0 4.8 H3.8 V8.25 L0 7.7 Z M4.4 4.8 H9 V9 L4.4 8.35 Z" fill="#0d6fd3"/></svg>
<div class="ab t" style="left:646.90px;top:366.70px;font-size:8.2px;line-height:8.2px;transform:scaleX(0.946);color:#176aa0;">Workstation 3</div>
<div class="ab t" style="left:756.90px;top:366.70px;font-size:8.2px;line-height:8.2px;transform:scaleX(0.900);">Customer name</div>
<div class="ab t" style="left:865.60px;top:366.70px;font-size:8.2px;line-height:8.2px;transform:scaleX(0.926);">Site name</div>
<div class="ab" style="left:969.6px;top:360.30px;width:30.199999999999953px;height:19.70px;overflow:hidden">
<div class="ab t" style="left:4.90px;top:5.70px;font-size:8.2px;line-height:8.2px;transform:scaleX(0.870);">01 JAN 2024</div>
</div>
<svg class="ab" style="left:1015px;top:364.90000000000003px" width="4" height="10" viewBox="0 0 4 10"><circle cx="2" cy="1.1" r="0.88" fill="#1c6fa6"/><circle cx="2" cy="4.7" r="0.88" fill="#1c6fa6"/><circle cx="2" cy="8.3" r="0.88" fill="#1c6fa6"/></svg>
<svg class="ab" style="left:51px;top:385px" width="9" height="9" viewBox="0 0 9 9"><rect x="0.65" y="0.65" width="7.7" height="7.7" rx="1.2" fill="none" stroke="#0d6ba5" stroke-width="1.3"/></svg>
<div class="ab t" style="left:69.60px;top:386.70px;font-size:8.2px;line-height:8.2px;transform:scaleX(0.839);color:#262626;">CVE-2024-18023</div>
<div class="badge Important" style="left:179.9px;top:383.70px"></div>
<div class="ab t" style="left:192.75px;top:386.50px;font-size:6.6px;line-height:6.6px;transform:scaleX(1.051);color:#fff;-webkit-text-stroke:0.15px #fff;">Important</div>
<div class="ab t" style="left:244.60px;top:386.70px;font-size:8.2px;line-height:8.2px;transform:scaleX(0.887);">6.3</div>
<div class="ab t" style="left:311.40px;top:386.70px;font-size:8.2px;line-height:8.2px;transform:scaleX(0.908);">Unresolved</div>
<div class="ab t" style="left:392.30px;top:386.70px;font-size:8.2px;line-height:8.2px;transform:scaleX(0.900);">No</div>
<div class="ab t" style="left:469.90px;top:386.70px;font-size:8.2px;line-height:8.2px;transform:scaleX(0.927);">Microsoft Outlook (<span style="color:#176aa0">+7 more</span>)</div>
<svg class="ab" style="left:617px;top:384.8px" width="9" height="9" viewBox="0 0 9 9"><path d="M0 1.3 L3.8 0.75 V4.2 H0 Z M4.4 0.65 L9 0 V4.2 H4.4 Z M0 4.8 H3.8 V8.25 L0 7.7 Z M4.4 4.8 H9 V9 L4.4 8.35 Z" fill="#0d6fd3"/></svg>
<div class="ab t" style="left:646.90px;top:386.70px;font-size:8.2px;line-height:8.2px;transform:scaleX(0.946);color:#176aa0;">Workstation 3</div>
<div class="ab t" style="left:756.90px;top:386.70px;font-size:8.2px;line-height:8.2px;transform:scaleX(0.900);">Customer name</div>
<div class="ab t" style="left:865.60px;top:386.70px;font-size:8.2px;line-height:8.2px;transform:scaleX(0.926);">Site name</div>
<div class="ab" style="left:969.6px;top:380.30px;width:30.199999999999953px;height:17.70px;overflow:hidden">
<div class="ab t" style="left:4.90px;top:5.70px;font-size:8.2px;line-height:8.2px;transform:scaleX(0.870);">01 JAN 2024</div>
</div>
<svg class="ab" style="left:1015px;top:384.90000000000003px" width="4" height="10" viewBox="0 0 4 10"><circle cx="2" cy="1.1" r="0.88" fill="#1c6fa6"/><circle cx="2" cy="4.7" r="0.88" fill="#1c6fa6"/><circle cx="2" cy="8.3" r="0.88" fill="#1c6fa6"/></svg>
<svg class="ab" style="left:51px;top:403px" width="9" height="9" viewBox="0 0 9 9"><rect x="0.65" y="0.65" width="7.7" height="7.7" rx="1.2" fill="none" stroke="#0d6ba5" stroke-width="1.3"/></svg>
<div class="ab t" style="left:69.60px;top:404.70px;font-size:8.2px;line-height:8.2px;transform:scaleX(0.839);color:#262626;">CVE-2022-40756</div>
<div class="badge Moderate" style="left:179.9px;top:401.70px"></div>
<div class="ab t" style="left:193.40px;top:404.50px;font-size:6.6px;line-height:6.6px;color:#111;-webkit-text-stroke:0.2px #111;">Moderate</div>
<div class="ab t" style="left:244.60px;top:404.70px;font-size:8.2px;line-height:8.2px;transform:scaleX(0.887);">5.4</div>
<div class="ab t" style="left:311.40px;top:404.70px;font-size:8.2px;line-height:8.2px;transform:scaleX(0.945);color:#1a1a1a;-webkit-text-stroke:0.26px #1a1a1a;">Exploitable</div>
<svg class="ab" style="left:351.8px;top:402.3px" width="9.4" height="9" viewBox="0 0 9.4 9"><path d="M4.7 0.7 L8.8 8.2 H0.6 Z" fill="#f6b90d" stroke="#f6b90d" stroke-width="0.9" stroke-linejoin="round"/><rect x="4.2" y="2.6" width="1.0" height="3.6" fill="#1e1e3a"/><rect x="4.2" y="6.9" width="1.0" height="0.9" fill="#1e1e3a"/></svg>
<div class="ab t" style="left:392.30px;top:404.70px;font-size:8.2px;line-height:8.2px;transform:scaleX(0.876);">Yes</div>
<div class="ab t" style="left:469.90px;top:404.70px;font-size:8.2px;line-height:8.2px;transform:scaleX(0.927);">Microsoft Outlook (<span style="color:#176aa0">+7 more</span>)</div>
<svg class="ab" style="left:617px;top:402.8px" width="9" height="9" viewBox="0 0 9 9"><path d="M0 1.3 L3.8 0.75 V4.2 H0 Z M4.4 0.65 L9 0 V4.2 H4.4 Z M0 4.8 H3.8 V8.25 L0 7.7 Z M4.4 4.8 H9 V9 L4.4 8.35 Z" fill="#0d6fd3"/></svg>
<div class="ab t" style="left:646.90px;top:404.70px;font-size:8.2px;line-height:8.2px;transform:scaleX(0.946);color:#176aa0;">Workstation 4</div>
<div class="ab t" style="left:756.90px;top:404.70px;font-size:8.2px;line-height:8.2px;transform:scaleX(0.900);">Customer name</div>
<div class="ab t" style="left:865.60px;top:404.70px;font-size:8.2px;line-height:8.2px;transform:scaleX(0.926);">Site name</div>
<div class="ab" style="left:969.6px;top:398.30px;width:30.199999999999953px;height:18.70px;overflow:hidden">
<div class="ab t" style="left:4.90px;top:5.70px;font-size:8.2px;line-height:8.2px;transform:scaleX(0.870);">01 JAN 2024</div>
</div>
<svg class="ab" style="left:1015px;top:402.90000000000003px" width="4" height="10" viewBox="0 0 4 10"><circle cx="2" cy="1.1" r="0.88" fill="#1c6fa6"/><circle cx="2" cy="4.7" r="0.88" fill="#1c6fa6"/><circle cx="2" cy="8.3" r="0.88" fill="#1c6fa6"/></svg>
<svg class="ab" style="left:51px;top:422px" width="9" height="9" viewBox="0 0 9 9"><rect x="0.65" y="0.65" width="7.7" height="7.7" rx="1.2" fill="none" stroke="#0d6ba5" stroke-width="1.3"/></svg>
<div class="ab t" style="left:69.60px;top:423.70px;font-size:8.2px;line-height:8.2px;transform:scaleX(0.839);color:#262626;">CVE-2023-19382</div>
<div class="badge Moderate" style="left:179.9px;top:420.70px"></div>
<div class="ab t" style="left:193.40px;top:423.50px;font-size:6.6px;line-height:6.6px;color:#111;-webkit-text-stroke:0.2px #111;">Moderate</div>
<div class="ab t" style="left:244.60px;top:423.70px;font-size:8.2px;line-height:8.2px;transform:scaleX(0.887);">5.3</div>
<div class="ab t" style="left:311.40px;top:423.70px;font-size:8.2px;line-height:8.2px;transform:scaleX(0.908);">Unresolved</div>
<div class="ab t" style="left:392.30px;top:423.70px;font-size:8.2px;line-height:8.2px;transform:scaleX(0.876);">Yes</div>
<div class="ab t" style="left:469.90px;top:423.70px;font-size:8.2px;line-height:8.2px;transform:scaleX(0.927);">Microsoft Outlook (<span style="color:#176aa0">+7 more</span>)</div>
<svg class="ab" style="left:617px;top:421.8px" width="9" height="9" viewBox="0 0 9 9"><path d="M0 1.3 L3.8 0.75 V4.2 H0 Z M4.4 0.65 L9 0 V4.2 H4.4 Z M0 4.8 H3.8 V8.25 L0 7.7 Z M4.4 4.8 H9 V9 L4.4 8.35 Z" fill="#0d6fd3"/></svg>
<div class="ab t" style="left:646.90px;top:423.70px;font-size:8.2px;line-height:8.2px;transform:scaleX(0.946);color:#176aa0;">Workstation 4</div>
<div class="ab t" style="left:756.90px;top:423.70px;font-size:8.2px;line-height:8.2px;transform:scaleX(0.900);">Customer name</div>
<div class="ab t" style="left:865.60px;top:423.70px;font-size:8.2px;line-height:8.2px;transform:scaleX(0.926);">Site name</div>
<div class="ab" style="left:969.6px;top:417.30px;width:30.199999999999953px;height:18.70px;overflow:hidden">
<div class="ab t" style="left:4.90px;top:5.70px;font-size:8.2px;line-height:8.2px;transform:scaleX(0.870);">01 JAN 2024</div>
</div>
<svg class="ab" style="left:1015px;top:421.90000000000003px" width="4" height="10" viewBox="0 0 4 10"><circle cx="2" cy="1.1" r="0.88" fill="#1c6fa6"/><circle cx="2" cy="4.7" r="0.88" fill="#1c6fa6"/><circle cx="2" cy="8.3" r="0.88" fill="#1c6fa6"/></svg>
<svg class="ab" style="left:51px;top:441px" width="9" height="9" viewBox="0 0 9 9"><rect x="0.65" y="0.65" width="7.7" height="7.7" rx="1.2" fill="none" stroke="#0d6ba5" stroke-width="1.3"/></svg>
<div class="ab t" style="left:69.60px;top:442.70px;font-size:8.2px;line-height:8.2px;transform:scaleX(0.839);color:#262626;">CVE-2024-19483</div>
<div class="badge Moderate" style="left:179.9px;top:439.70px"></div>
<div class="ab t" style="left:193.40px;top:442.50px;font-size:6.6px;line-height:6.6px;color:#111;-webkit-text-stroke:0.2px #111;">Moderate</div>
<div class="ab t" style="left:244.60px;top:442.70px;font-size:8.2px;line-height:8.2px;transform:scaleX(0.887);">5.1</div>
<div class="ab t" style="left:311.40px;top:442.70px;font-size:8.2px;line-height:8.2px;transform:scaleX(0.908);">Unresolved</div>
<div class="ab t" style="left:392.30px;top:442.70px;font-size:8.2px;line-height:8.2px;transform:scaleX(0.900);">No</div>
<div class="ab t" style="left:469.90px;top:442.70px;font-size:8.2px;line-height:8.2px;transform:scaleX(0.927);">Microsoft Outlook (<span style="color:#176aa0">+7 more</span>)</div>
<svg class="ab" style="left:617px;top:440.8px" width="9" height="9" viewBox="0 0 9 9"><path d="M0 1.3 L3.8 0.75 V4.2 H0 Z M4.4 0.65 L9 0 V4.2 H4.4 Z M0 4.8 H3.8 V8.25 L0 7.7 Z M4.4 4.8 H9 V9 L4.4 8.35 Z" fill="#0d6fd3"/></svg>
<div class="ab t" style="left:646.90px;top:442.70px;font-size:8.2px;line-height:8.2px;transform:scaleX(0.946);color:#176aa0;">Workstation 4</div>
<div class="ab t" style="left:756.90px;top:442.70px;font-size:8.2px;line-height:8.2px;transform:scaleX(0.900);">Customer name</div>
<div class="ab t" style="left:865.60px;top:442.70px;font-size:8.2px;line-height:8.2px;transform:scaleX(0.926);">Site name</div>
<div class="ab" style="left:969.6px;top:436.30px;width:30.199999999999953px;height:18.70px;overflow:hidden">
<div class="ab t" style="left:4.90px;top:5.70px;font-size:8.2px;line-height:8.2px;transform:scaleX(0.870);">01 JAN 2024</div>
</div>
<svg class="ab" style="left:1015px;top:440.90000000000003px" width="4" height="10" viewBox="0 0 4 10"><circle cx="2" cy="1.1" r="0.88" fill="#1c6fa6"/><circle cx="2" cy="4.7" r="0.88" fill="#1c6fa6"/><circle cx="2" cy="8.3" r="0.88" fill="#1c6fa6"/></svg>
<svg class="ab" style="left:51px;top:460px" width="9" height="9" viewBox="0 0 9 9"><rect x="0.65" y="0.65" width="7.7" height="7.7" rx="1.2" fill="none" stroke="#0d6ba5" stroke-width="1.3"/></svg>
<div class="ab t" style="left:69.60px;top:461.70px;font-size:8.2px;line-height:8.2px;transform:scaleX(0.839);color:#262626;">CVE-2024-18023</div>
<div class="badge Moderate" style="left:179.9px;top:458.70px"></div>
<div class="ab t" style="left:193.40px;top:461.50px;font-size:6.6px;line-height:6.6px;color:#111;-webkit-text-stroke:0.2px #111;">Moderate</div>
<div class="ab t" style="left:244.60px;top:461.70px;font-size:8.2px;line-height:8.2px;transform:scaleX(0.887);">5.0</div>
<div class="ab t" style="left:311.40px;top:461.70px;font-size:8.2px;line-height:8.2px;transform:scaleX(0.908);">Unresolved</div>
<div class="ab t" style="left:392.30px;top:461.70px;font-size:8.2px;line-height:8.2px;transform:scaleX(0.876);">Yes</div>
<div class="ab t" style="left:469.90px;top:461.70px;font-size:8.2px;line-height:8.2px;transform:scaleX(0.927);">Microsoft Outlook (<span style="color:#176aa0">+7 more</span>)</div>
<svg class="ab" style="left:617px;top:459.8px" width="9" height="9" viewBox="0 0 9 9"><path d="M0 1.3 L3.8 0.75 V4.2 H0 Z M4.4 0.65 L9 0 V4.2 H4.4 Z M0 4.8 H3.8 V8.25 L0 7.7 Z M4.4 4.8 H9 V9 L4.4 8.35 Z" fill="#0d6fd3"/></svg>
<div class="ab t" style="left:646.90px;top:461.70px;font-size:8.2px;line-height:8.2px;transform:scaleX(0.946);color:#176aa0;">Workstation 4</div>
<div class="ab t" style="left:756.90px;top:461.70px;font-size:8.2px;line-height:8.2px;transform:scaleX(0.900);">Customer name</div>
<div class="ab t" style="left:865.60px;top:461.70px;font-size:8.2px;line-height:8.2px;transform:scaleX(0.926);">Site name</div>
<div class="ab" style="left:969.6px;top:455.30px;width:30.199999999999953px;height:18.70px;overflow:hidden">
<div class="ab t" style="left:4.90px;top:5.70px;font-size:8.2px;line-height:8.2px;transform:scaleX(0.870);">01 JAN 2024</div>
</div>
<svg class="ab" style="left:1015px;top:459.90000000000003px" width="4" height="10" viewBox="0 0 4 10"><circle cx="2" cy="1.1" r="0.88" fill="#1c6fa6"/><circle cx="2" cy="4.7" r="0.88" fill="#1c6fa6"/><circle cx="2" cy="8.3" r="0.88" fill="#1c6fa6"/></svg>
<svg class="ab" style="left:51px;top:479px" width="9" height="9" viewBox="0 0 9 9"><rect x="0.65" y="0.65" width="7.7" height="7.7" rx="1.2" fill="none" stroke="#0d6ba5" stroke-width="1.3"/></svg>
<div class="ab t" style="left:69.60px;top:480.70px;font-size:8.2px;line-height:8.2px;transform:scaleX(0.839);color:#262626;">CVE-2015-20231</div>
<div class="badge Moderate" style="left:179.9px;top:477.70px"></div>
<div class="ab t" style="left:193.40px;top:480.50px;font-size:6.6px;line-height:6.6px;color:#111;-webkit-text-stroke:0.2px #111;">Moderate</div>
<div class="ab t" style="left:244.60px;top:480.70px;font-size:8.2px;line-height:8.2px;transform:scaleX(0.887);">5.1</div>
<div class="ab t" style="left:311.40px;top:480.70px;font-size:8.2px;line-height:8.2px;transform:scaleX(0.908);">Unresolved</div>
<div class="ab t" style="left:392.30px;top:480.70px;font-size:8.2px;line-height:8.2px;transform:scaleX(0.876);">Yes</div>
<div class="ab t" style="left:469.90px;top:480.70px;font-size:8.2px;line-height:8.2px;transform:scaleX(0.927);">Microsoft Outlook (<span style="color:#176aa0">+7 more</span>)</div>
<svg class="ab" style="left:617px;top:478.8px" width="9" height="9" viewBox="0 0 9 9"><path d="M0 1.3 L3.8 0.75 V4.2 H0 Z M4.4 0.65 L9 0 V4.2 H4.4 Z M0 4.8 H3.8 V8.25 L0 7.7 Z M4.4 4.8 H9 V9 L4.4 8.35 Z" fill="#0d6fd3"/></svg>
<div class="ab t" style="left:646.90px;top:480.70px;font-size:8.2px;line-height:8.2px;transform:scaleX(0.946);color:#176aa0;">Workstation 5</div>
<div class="ab t" style="left:756.90px;top:480.70px;font-size:8.2px;line-height:8.2px;transform:scaleX(0.900);">Customer name</div>
<div class="ab t" style="left:865.60px;top:480.70px;font-size:8.2px;line-height:8.2px;transform:scaleX(0.926);">Site name</div>
<div class="ab" style="left:969.6px;top:474.30px;width:30.199999999999953px;height:19.70px;overflow:hidden">
<div class="ab t" style="left:4.90px;top:5.70px;font-size:8.2px;line-height:8.2px;transform:scaleX(0.870);">01 JAN 2024</div>
</div>
<svg class="ab" style="left:1015px;top:478.90000000000003px" width="4" height="10" viewBox="0 0 4 10"><circle cx="2" cy="1.1" r="0.88" fill="#1c6fa6"/><circle cx="2" cy="4.7" r="0.88" fill="#1c6fa6"/><circle cx="2" cy="8.3" r="0.88" fill="#1c6fa6"/></svg>
<svg class="ab" style="left:51px;top:499px" width="9" height="9" viewBox="0 0 9 9"><rect x="0.65" y="0.65" width="7.7" height="7.7" rx="1.2" fill="none" stroke="#0d6ba5" stroke-width="1.3"/></svg>
<div class="ab t" style="left:69.60px;top:500.70px;font-size:8.2px;line-height:8.2px;transform:scaleX(0.839);color:#262626;">CVE-2009-1212</div>
<div class="badge Moderate" style="left:179.9px;top:497.70px"></div>
<div class="ab t" style="left:193.40px;top:500.50px;font-size:6.6px;line-height:6.6px;color:#111;-webkit-text-stroke:0.2px #111;">Moderate</div>
<div class="ab t" style="left:244.60px;top:500.70px;font-size:8.2px;line-height:8.2px;transform:scaleX(0.887);">3.4</div>
<div class="ab t" style="left:311.40px;top:500.70px;font-size:8.2px;line-height:8.2px;transform:scaleX(0.908);">Unresolved</div>
<div class="ab t" style="left:392.30px;top:500.70px;font-size:8.2px;line-height:8.2px;transform:scaleX(0.900);">No</div>
<div class="ab t" style="left:469.90px;top:500.70px;font-size:8.2px;line-height:8.2px;transform:scaleX(0.927);">Microsoft Outlook (<span style="color:#176aa0">+7 more</span>)</div>
<svg class="ab" style="left:617px;top:498.8px" width="9" height="9" viewBox="0 0 9 9"><path d="M0 1.3 L3.8 0.75 V4.2 H0 Z M4.4 0.65 L9 0 V4.2 H4.4 Z M0 4.8 H3.8 V8.25 L0 7.7 Z M4.4 4.8 H9 V9 L4.4 8.35 Z" fill="#0d6fd3"/></svg>
<div class="ab t" style="left:646.90px;top:500.70px;font-size:8.2px;line-height:8.2px;transform:scaleX(0.946);color:#176aa0;">Workstation 5</div>
<div class="ab t" style="left:756.90px;top:500.70px;font-size:8.2px;line-height:8.2px;transform:scaleX(0.900);">Customer name</div>
<div class="ab t" style="left:865.60px;top:500.70px;font-size:8.2px;line-height:8.2px;transform:scaleX(0.926);">Site name</div>
<div class="ab" style="left:969.6px;top:494.30px;width:30.199999999999953px;height:18.70px;overflow:hidden">
<div class="ab t" style="left:4.90px;top:5.70px;font-size:8.2px;line-height:8.2px;transform:scaleX(0.870);">01 JAN 2024</div>
</div>
<svg class="ab" style="left:1015px;top:498.90000000000003px" width="4" height="10" viewBox="0 0 4 10"><circle cx="2" cy="1.1" r="0.88" fill="#1c6fa6"/><circle cx="2" cy="4.7" r="0.88" fill="#1c6fa6"/><circle cx="2" cy="8.3" r="0.88" fill="#1c6fa6"/></svg>
<svg class="ab" style="left:51px;top:518px" width="9" height="9" viewBox="0 0 9 9"><rect x="0.65" y="0.65" width="7.7" height="7.7" rx="1.2" fill="none" stroke="#0d6ba5" stroke-width="1.3"/></svg>
<div class="ab t" style="left:69.60px;top:519.70px;font-size:8.2px;line-height:8.2px;transform:scaleX(0.839);color:#262626;">CVE-2007-1406</div>
<div class="badge Low" style="left:179.9px;top:516.70px"></div>
<div class="ab t" style="left:201.70px;top:519.50px;font-size:6.6px;line-height:6.6px;transform:scaleX(0.942);color:#fff;-webkit-text-stroke:0.15px #fff;">Low</div>
<div class="ab t" style="left:244.60px;top:519.70px;font-size:8.2px;line-height:8.2px;transform:scaleX(0.887);">2.4</div>
<div class="ab t" style="left:311.40px;top:519.70px;font-size:8.2px;line-height:8.2px;transform:scaleX(0.908);">Unresolved</div>
<div class="ab t" style="left:392.30px;top:519.70px;font-size:8.2px;line-height:8.2px;transform:scaleX(0.939);">Partial</div>
<div class="ab t" style="left:469.90px;top:519.70px;font-size:8.2px;line-height:8.2px;transform:scaleX(0.927);">Microsoft Outlook (<span style="color:#176aa0">+7 more</span>)</div>
<svg class="ab" style="left:617px;top:517.8px" width="9" height="9" viewBox="0 0 9 9"><path d="M0 1.3 L3.8 0.75 V4.2 H0 Z M4.4 0.65 L9 0 V4.2 H4.4 Z M0 4.8 H3.8 V8.25 L0 7.7 Z M4.4 4.8 H9 V9 L4.4 8.35 Z" fill="#0d6fd3"/></svg>
<div class="ab t" style="left:646.90px;top:519.70px;font-size:8.2px;line-height:8.2px;transform:scaleX(0.946);color:#176aa0;">Workstation 5</div>
<div class="ab t" style="left:756.90px;top:519.70px;font-size:8.2px;line-height:8.2px;transform:scaleX(0.900);">Customer name</div>
<div class="ab t" style="left:865.60px;top:519.70px;font-size:8.2px;line-height:8.2px;transform:scaleX(0.926);">Site name</div>
<div class="ab" style="left:969.6px;top:513.30px;width:30.199999999999953px;height:19.70px;overflow:hidden">
<div class="ab t" style="left:4.90px;top:5.70px;font-size:8.2px;line-height:8.2px;transform:scaleX(0.870);">01 JAN 2024</div>
</div>
<svg class="ab" style="left:1015px;top:517.9px" width="4" height="10" viewBox="0 0 4 10"><circle cx="2" cy="1.1" r="0.88" fill="#1c6fa6"/><circle cx="2" cy="4.7" r="0.88" fill="#1c6fa6"/><circle cx="2" cy="8.3" r="0.88" fill="#1c6fa6"/></svg>
<svg class="ab" style="left:51px;top:538px" width="9" height="9" viewBox="0 0 9 9"><rect x="0.65" y="0.65" width="7.7" height="7.7" rx="1.2" fill="none" stroke="#0d6ba5" stroke-width="1.3"/></svg>
<div class="ab t" style="left:69.60px;top:539.70px;font-size:8.2px;line-height:8.2px;transform:scaleX(0.839);color:#262626;">CVE-2001-49313</div>
<div class="badge Unknown" style="left:179.9px;top:536.70px"></div>
<div class="ab t" style="left:193.90px;top:539.50px;font-size:6.6px;line-height:6.6px;transform:scaleX(0.981);color:#333;-webkit-text-stroke:0.12px #333;">Unknown</div>
<div class="ab t" style="left:244.60px;top:539.70px;font-size:8.2px;line-height:8.2px;transform:scaleX(0.887);">-</div>
<div class="ab t" style="left:311.40px;top:539.70px;font-size:8.2px;line-height:8.2px;transform:scaleX(0.908);">Unresolved</div>
<div class="ab t" style="left:392.30px;top:539.70px;font-size:8.2px;line-height:8.2px;transform:scaleX(0.876);">Yes</div>
<div class="ab t" style="left:469.90px;top:539.70px;font-size:8.2px;line-height:8.2px;transform:scaleX(0.927);">Microsoft Outlook (<span style="color:#176aa0">+7 more</span>)</div>
<svg class="ab" style="left:617px;top:537.8px" width="9" height="9" viewBox="0 0 9 9"><path d="M0 1.3 L3.8 0.75 V4.2 H0 Z M4.4 0.65 L9 0 V4.2 H4.4 Z M0 4.8 H3.8 V8.25 L0 7.7 Z M4.4 4.8 H9 V9 L4.4 8.35 Z" fill="#0d6fd3"/></svg>
<div class="ab t" style="left:646.90px;top:539.70px;font-size:8.2px;line-height:8.2px;transform:scaleX(0.946);color:#176aa0;">Workstation 6</div>
<div class="ab t" style="left:756.90px;top:539.70px;font-size:8.2px;line-height:8.2px;transform:scaleX(0.900);">Customer name</div>
<div class="ab t" style="left:865.60px;top:539.70px;font-size:8.2px;line-height:8.2px;transform:scaleX(0.926);">Site name</div>
<div class="ab" style="left:969.6px;top:533.30px;width:30.199999999999953px;height:18.70px;overflow:hidden">
<div class="ab t" style="left:4.90px;top:5.70px;font-size:8.2px;line-height:8.2px;transform:scaleX(0.870);">01 JAN 2024</div>
</div>
<svg class="ab" style="left:1015px;top:537.9px" width="4" height="10" viewBox="0 0 4 10"><circle cx="2" cy="1.1" r="0.88" fill="#1c6fa6"/><circle cx="2" cy="4.7" r="0.88" fill="#1c6fa6"/><circle cx="2" cy="8.3" r="0.88" fill="#1c6fa6"/></svg>
<div class="btn" style="left:46px;top:559px;width:37px;height:20px;border-color:#dddddd"></div>
<div class="ab t" style="left:50.00px;top:565.90px;font-size:7.8px;line-height:7.8px;transform:scaleX(0.922);color:#333;">50</div>
<svg class="ab" style="left:70.9px;top:567.2px" width="5" height="3" viewBox="0 0 5 3"><path d="M0 0 H4.6 L2.3 2.4 Z" fill="#176aa0"/></svg>
<svg class="ab" style="left:951.5px;top:564.8px" width="5" height="8" viewBox="0 0 5 8"><path d="M4.3 0.6 L1 3.8 L4.3 7.0" fill="none" stroke="#555" stroke-width="1.1"/></svg>
<div class="btn" style="left:968px;top:559px;width:23px;height:20px;border-color:#dddddd"></div>
<div class="ab t" style="left:973.60px;top:565.90px;font-size:7.8px;line-height:7.8px;transform:scaleX(0.599);color:#444;">1</div>
<div class="ab t" style="left:992.90px;top:565.90px;font-size:7.8px;line-height:7.8px;transform:scaleX(0.984);color:#9a9a9a;">of</div>
<div class="ab t" style="left:1001.90px;top:565.90px;font-size:7.8px;line-height:7.8px;transform:scaleX(0.922);color:#333;">50</div>
<svg class="ab" style="left:1021.6px;top:564.8px" width="5" height="8" viewBox="0 0 5 8"><path d="M0.7 0.6 L4 3.8 L0.7 7.0" fill="none" stroke="#176aa0" stroke-width="1.1"/></svg>
</body></html>
